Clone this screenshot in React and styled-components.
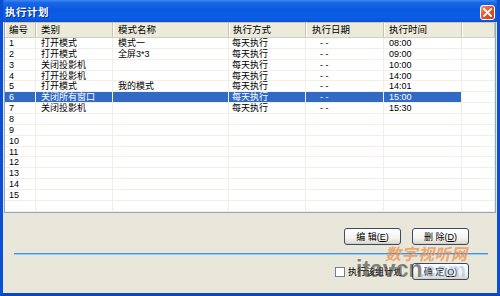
import React from "react";
import styled, { createGlobalStyle } from "styled-components";

const Global = createGlobalStyle`
  html, body { margin: 0; padding: 0; background: #fff; }
  body { font-family: "Liberation Sans", "Noto Sans CJK SC", sans-serif; }
  * { box-sizing: border-box; }
`;

const FONT = `"Liberation Sans", "Noto Sans CJK SC", sans-serif`;
const COLS = "31px 77px 116px 77px 78px 78px 1fr";

const Window = styled.div`
  width: 500px;
  height: 296px;
  display: flex;
  flex-direction: column;
  background: #0842c8;
  border-left: 3px solid #0a4fd6;
  border-right: 3px solid #0a4fd6;
  border-bottom: 3px solid #0a45c6;
  position: relative;
  overflow: hidden;
`;

const TitleBar = styled.div`
  height: 22px;
  margin: 0 -3px;
  padding: 0 5px;
  display: flex;
  align-items: center;
  justify-content: space-between;
  background: linear-gradient(to bottom, #3a8cf3 0%, #1a66e6 12%, #0a58df 45%, #0b5de6 80%, #0a52d6 100%);
  border-radius: 6px 6px 0 0;
`;

const Title = styled.span`
  color: #fff;
  font: bold 10.5px ${FONT};
  letter-spacing: 0.5px;
  text-shadow: 1px 1px 0 #0a2f8f;
  margin-top: 1px;
`;

const CloseButton = styled.div`
  width: 15px;
  height: 15px;
  margin-top: 2px;
  border: 1px solid #fff;
  border-radius: 3px;
  background: linear-gradient(135deg, #f29a7a 0%, #e0582c 45%, #c9401a 100%);
  display: flex;
  align-items: center;
  justify-content: center;
`;

const Body = styled.div`
  flex: 1;
  display: flex;
  flex-direction: column;
  background: #e9e7da;
  padding: 0 1px;
`;

const ListView = styled.div`
  height: 191px;
  background: #fff;
  border: 1px solid #8fa7c4;
  border-top-color: #c9c6b6;
  display: flex;
  flex-direction: column;
  overflow: hidden;
`;

const HeaderRow = styled.div`
  display: grid;
  grid-template-columns: ${COLS};
  height: 15px;
  background: #ebeadb;
  border-bottom: 1px solid #d4d0c0;
`;

const HeaderCell = styled.div`
  font: 9.5px ${FONT};
  color: #000;
  padding-left: ${(p) => p.$pad ?? 4}px;
  line-height: 14px;
  white-space: nowrap;
  border-right: 1px solid #c7c4b4;
  box-shadow: inset 1px 0 0 #fff;
`;

const Row = styled.div`
  display: grid;
  grid-template-columns: ${COLS};
  height: 10.86px;
`;

const Cell = styled.div`
  font: 9px ${FONT};
  line-height: 10.86px;
  padding-left: ${(p) => p.$pad ?? 4}px;
  white-space: nowrap;
  overflow: hidden;
  color: ${(p) => (p.$sel ? "#fff" : "#000")};
  background: ${(p) => (p.$sel ? "#316ac5" : "transparent")};
  border-right: 1px solid #efede4;
  border-bottom: 1px solid #f1efe7;
`;

const Footer = styled.div`
  flex: 1;
  display: flex;
  flex-direction: column;
  padding: 15px 0 0;
  position: relative;
`;

const ButtonRow = styled.div`
  display: flex;
  justify-content: flex-end;
  gap: 11px;
  padding-right: 27px;
`;

const Button = styled.button`
  width: 57px;
  height: 17px;
  padding: 0;
  border: 1px solid #3b4a6a;
  border-radius: 3px;
  background: linear-gradient(to bottom, #ffffff 0%, #f4f3ee 60%, #dcd9cc 100%);
  font: 9px ${FONT};
  color: #000;
  display: flex;
  align-items: center;
  justify-content: center;
  box-shadow: inset 0 -1px 0 #d6d0c0;
`;

const Divider = styled.div`
  height: 2px;
  margin: 8px 8px 0 10px;
  background: #3d95e6;
  border-bottom: 1px solid #9fcaf0;
`;

const BottomRow = styled.div`
  display: flex;
  align-items: center;
  justify-content: flex-end;
  padding-right: 27px;
  margin-top: 8px;
  gap: 10px;
`;

const CheckLabel = styled.label`
  display: flex;
  align-items: center;
  gap: 3px;
  font: 9px ${FONT};
  color: #000;
`;

const CheckBox = styled.span`
  width: 10px;
  height: 10px;
  background: #fff;
  border: 1px solid #6d7f99;
`;

const Watermark = styled.div`
  position: absolute;
  left: ${(p) => p.$x}px;
  top: ${(p) => p.$y}px;
  font: ${(p) => p.$font};
  color: ${(p) => p.$color};
  opacity: ${(p) => p.$op ?? 0.8};
  white-space: nowrap;
  pointer-events: none;
  letter-spacing: ${(p) => p.$ls ?? 0}px;
  line-height: 1.15;
`;

const rows = [
  ["1", "打开模式", "模式一", "每天执行", "08:00"],
  ["2", "打开模式", "全屏3*3", "每天执行", "09:00"],
  ["3", "关闭投影机", "", "每天执行", "10:00"],
  ["4", "打开投影机", "", "每天执行", "14:00"],
  ["5", "打开模式", "我的模式", "每天执行", "14:01"],
  ["6", "关闭所有窗口", "", "每天执行", "15:00"],
  ["7", "关闭投影机", "", "每天执行", "15:30"],
  ...Array.from({ length: 8 }, (_, i) => [String(i + 8), "", "", "", ""]),
  ["", "", "", "", ""],
];

export default function App() {
  return (
    <>
      <Global />
      <Window>
        <TitleBar>
          <Title>执行计划</Title>
          <CloseButton>
            <svg width="9" height="9" viewBox="0 0 9 9">
              <path d="M1 1 L8 8 M8 1 L1 8" stroke="#fff" strokeWidth="1.8" strokeLinecap="square" />
            </svg>
          </CloseButton>
        </TitleBar>
        <Body>
          <ListView>
            <HeaderRow>
              <HeaderCell>编号</HeaderCell>
              <HeaderCell $pad={5}>类别</HeaderCell>
              <HeaderCell $pad={5}>模式名称</HeaderCell>
              <HeaderCell>执行方式</HeaderCell>
              <HeaderCell $pad={6}>执行日期</HeaderCell>
              <HeaderCell $pad={5}>执行时间</HeaderCell>
              <HeaderCell />
            </HeaderRow>
            {rows.map((r, i) => {
              const sel = i === 5;
              const hasData = r[3] !== "";
              return (
                <Row key={i}>
                  <Cell $sel={sel}>{r[0]}</Cell>
                  <Cell $sel={sel} $pad={5}>{r[1]}</Cell>
                  <Cell $sel={sel} $pad={5}>{r[2]}</Cell>
                  <Cell $sel={sel} $pad={3}>{r[3]}</Cell>
                  <Cell $sel={sel} $pad={14}>{hasData ? "-  -" : ""}</Cell>
                  <Cell $sel={sel} $pad={5}>{r[4]}</Cell>
                  <Cell />
                </Row>
              );
            })}
          </ListView>
          <Footer>
            <ButtonRow>
              <Button>编 辑(<u>E</u>)</Button>
              <Button>删 除(<u>D</u>)</Button>
            </ButtonRow>
            <Divider />
            <BottomRow>
              <CheckLabel>
                <CheckBox />
                执行该组计划
              </CheckLabel>
              <Button>确 定(<u>O</u>)</Button>
            </BottomRow>
            <Watermark $x={381} $y={33} $font={`italic bold 16px ${FONT}`} $color="#f28a3c" $op={0.7} $ls={0.5}>
              数字视听网
            </Watermark>
            <Watermark $x={352} $y={43} $font={`bold 23px "Liberation Sans", sans-serif`} $color="#3a3a3a" $op={0.6}>
              itavcn
            </Watermark>
            <Watermark $x={415} $y={46} $font={`bold 20px "Liberation Sans", sans-serif`} $color="#9fc0e8" $op={0.55}>
              .com
            </Watermark>
          </Footer>
        </Body>
      </Window>
    </>
  );
}
